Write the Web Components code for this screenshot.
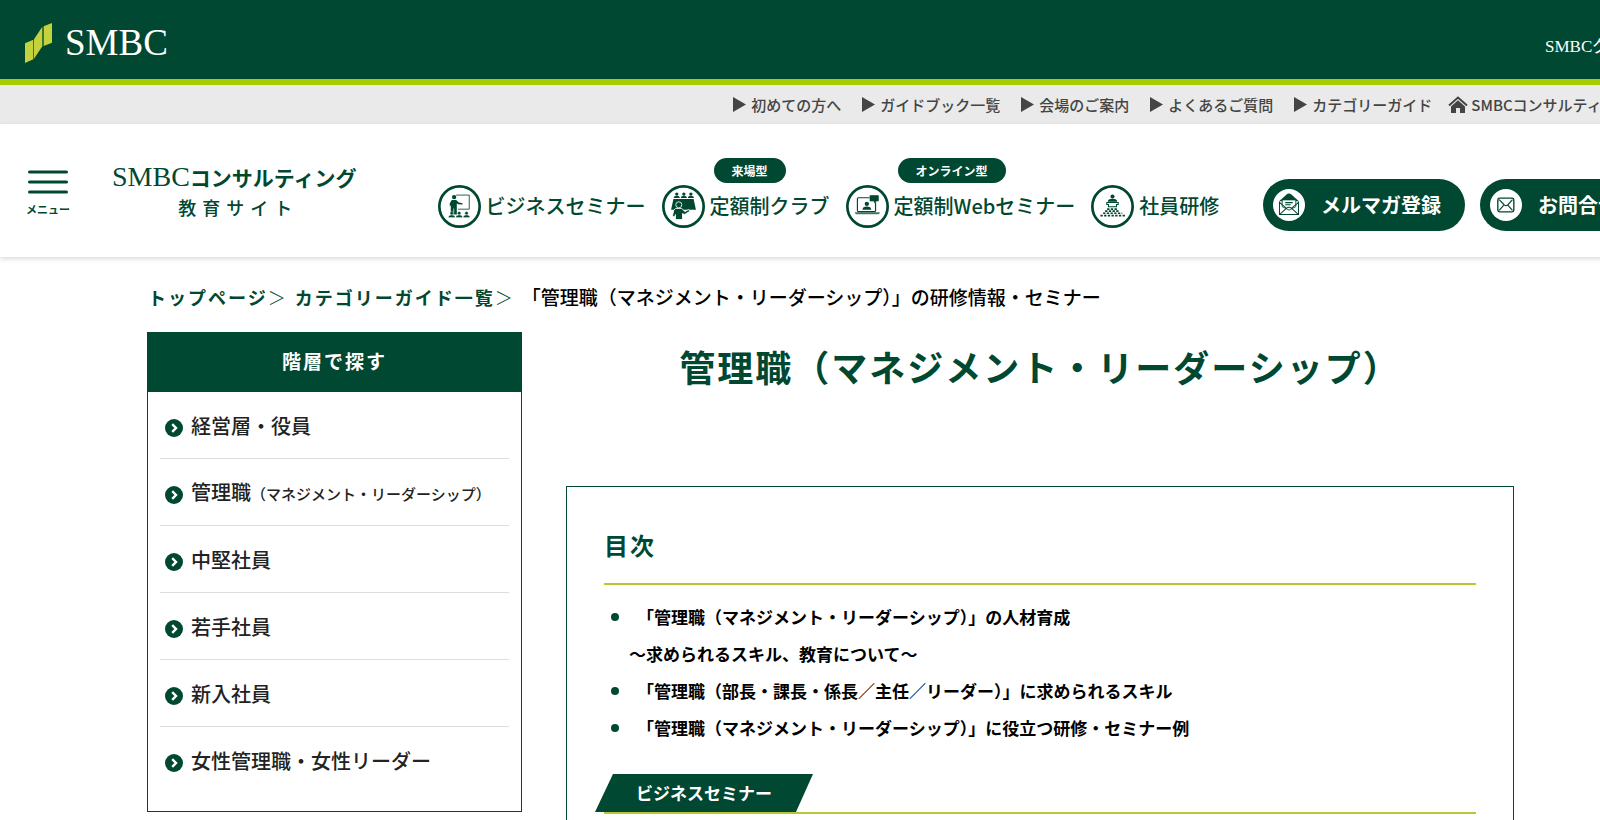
<!DOCTYPE html>
<html lang="ja">
<head>
<meta charset="utf-8">
<title>管理職（マネジメント・リーダーシップ） | SMBCコンサルティング</title>
<style>
  :root {
    --green: #004831;
    --lime: #a5cd00;
    --rule: #b9c832;
  }
  html {
    overflow-x: hidden;
  }
  body {
    margin: 0;
    min-width: 1662px;
    background: #fff;
    color: #000;
    font-family: "Noto Sans CJK JP", sans-serif;
    font-weight: 500;
    font-size: 17px;
  }
</style>
</head>
<body>
<site-topbar></site-topbar>
<utility-nav></utility-nav>

<site-header>
  <nav-item slot="nav" icon="seminar">ビジネスセミナー</nav-item>
  <nav-item slot="nav" icon="club" badge="来場型">定額制クラブ</nav-item>
  <nav-item slot="nav" icon="web" badge="オンライン型">定額制Webセミナー</nav-item>
  <nav-item slot="nav" icon="training">社員研修</nav-item>
  <pill-button slot="action" icon="letter">メルマガ登録</pill-button>
  <pill-button slot="action" icon="mail">お問合せ</pill-button>
</site-header>

<bread-crumb></bread-crumb>

<page-columns>
  <side-menu slot="side" heading="階層で探す">
    <side-item>経営層・役員</side-item>
    <side-item note="（マネジメント・リーダーシップ）">管理職</side-item>
    <side-item>中堅社員</side-item>
    <side-item>若手社員</side-item>
    <side-item>新入社員</side-item>
    <side-item>女性管理職・女性リーダー</side-item>
  </side-menu>
  <page-title>管理職（マネジメント・リーダーシップ）</page-title>
  <toc-box heading="目次" tab="ビジネスセミナー">
    <toc-item>「管理職（マネジメント・リーダーシップ）」の人材育成<br>～求められるスキル、教育について～</toc-item>
    <toc-item>「管理職（部長・課長・係長／主任／リーダー）」に求められるスキル</toc-item>
    <toc-item>「管理職（マネジメント・リーダーシップ）」に役立つ研修・セミナー例</toc-item>
  </toc-box>
</page-columns>

<script>
const ICONS = {
  seminar: `
    <path d="M54 30H93V72H60" fill="none" stroke="currentColor" stroke-width="2.5"/>
    <circle cx="48" cy="36" r="6.5" fill="currentColor"/>
    <path d="M41 45h13l8 7 11 2v4l-14-1-3-3v34H48V70h-2v18H38V60l-3 4v-10z" fill="currentColor"/>
    <g fill="currentColor" stroke="#fff" stroke-width="1">
      <circle cx="41" cy="84" r="5"/><path d="M31 97c0-6 4-8 10-8s10 2 10 8z"/>
      <circle cx="63" cy="84" r="5"/><path d="M53 97c0-6 4-8 10-8s10 2 10 8z"/>
      <circle cx="85" cy="84" r="5"/><path d="M75 97c0-6 4-8 10-8s10 2 10 8z"/>
    </g>`,
  club: `
    <g fill="currentColor">
      <circle cx="44" cy="27" r="5"/><path d="M35 39c0-5 4-7 9-7s9 2 9 7z"/>
      <circle cx="65" cy="27" r="5"/><path d="M56 39c0-5 4-7 9-7s9 2 9 7z"/>
      <circle cx="86" cy="27" r="5"/><path d="M77 39c0-5 4-7 9-7s9 2 9 7z"/>
      <path d="M34 42H94L101 74H27z"/>
    </g>
    <g fill="currentColor" stroke="#fff" stroke-width="2.5">
      <path d="M40 70h19l9 9 12-6 3 5-16 10-6-3v18H40V88l-2 7-7-2 4-18z"/>
      <circle cx="50" cy="59" r="9"/>
    </g>`,
  web: `
    <rect x="34" y="38" width="54" height="41" rx="3" fill="none" stroke="currentColor" stroke-width="3.5"/>
    <path d="M26 81H101C100 86 97 87 94 87H33C29 87 27 85 26 81z" fill="currentColor" opacity=".75"/>
    <circle cx="62" cy="56" r="6.5" fill="currentColor"/>
    <path d="M49 74c0-7 5-10 13-10s13 3 13 10z" fill="currentColor"/>
    <path d="M73 30h22q3 0 3 3v13q0 3-3 3h-5l-7 7v-7H73q-3 0-3-3V33q0-3 3-3z" fill="currentColor" stroke="#fff" stroke-width="1"/>`,
  training: `
    <circle cx="64" cy="34" r="6" fill="currentColor"/>
    <path d="M50 50c0-7 5-9 14-9s14 2 14 9z" fill="currentColor"/>
    <path d="M47 52H81V58H76V65H52V58H47z" fill="none" stroke="currentColor" stroke-width="3"/>
    <g fill="none" stroke="currentColor" stroke-width="5" stroke-dasharray="7 4">
      <path d="M48 72H81"/><path d="M42 78H86"/><path d="M36 84H93"/><path d="M28 91H101"/>
    </g>`,
  letter: `
    <path d="M18 36 40 16q7-6 14 0L76 36z" fill="currentColor"/>
    <path d="M27 32H67V52L47 62 27 52z" fill="#fff" stroke="currentColor" stroke-width="2.5"/>
    <path d="M36 40H58M36 46H52" stroke="currentColor" stroke-width="3"/>
    <path d="M19 37V75H75V37M19 39 40 57M75 39 54 57M19 75 40 56q7-5 14 0L75 75" fill="none" stroke="currentColor" stroke-width="3"/>`,
  mail: `
    <rect x="23" y="27" width="47" height="40" rx="5" fill="none" stroke="currentColor" stroke-width="4"/>
    <path d="M27 31 42 47q5 4 10 0L66 31M27 63 40 48M66 63 53 48" fill="none" stroke="currentColor" stroke-width="3.5"/>`
};

class BaseElement extends HTMLElement {
  connectedCallback() {
    if (this.shadowRoot) return;
    this.attachShadow({ mode: 'open' });
    this.shadowRoot.innerHTML = this.render();
  }
}

class SiteTopbar extends BaseElement {
  render() {
    return `
      <style>
        :host {
          display: flex;
          align-items: center;
          justify-content: space-between;
          box-sizing: border-box;
          height: 85px;
          padding: 6px 16px 0 25px;
          background: var(--green);
          border-bottom: 6px solid var(--lime);
        }
        a {
          display: flex;
          align-items: center;
          color: #fff;
          text-decoration: none;
          font-family: "Liberation Serif", "Noto Sans CJK JP", serif;
          font-weight: 400;
          white-space: nowrap;
        }
        .logo {
          gap: 13px;
          font-size: 37px;
          line-height: 40px;
        }
        .group {
          width: 101px;
          padding-top: 4px;
          font-size: 17px;
        }
      </style>
      <a class="logo" href="#">
        <svg width="27" height="40" viewBox="0 0 81 120" fill="#c4d23d" aria-hidden="true">
          <path d="M0 61 25 50V109L0 120z"/>
          <path d="M27 49 52 11V70L27 107z"/>
          <path d="M56 10 81 0V59L56 69z"/>
        </svg>
        SMBC
      </a>
      <a class="group" href="#">SMBCグループ</a>
    `;
  }
}

class UtilityNav extends BaseElement {
  render() {
    const links = ['初めての方へ', 'ガイドブック一覧', '会場のご案内', 'よくあるご質問', 'カテゴリーガイド'];
    return `
      <style>
        :host {
          display: block;
          background: #eaeaea;
        }
        nav {
          display: flex;
          align-items: center;
          gap: 16px;
          height: 39px;
          margin-left: 44%;
          padding-left: 2px;
        }
        .links {
          display: flex;
          gap: 21px;
        }
        a {
          display: flex;
          align-items: center;
          gap: 5px;
          color: #444;
          font-size: 15px;
          line-height: 20px;
          white-space: nowrap;
          text-decoration: none;
        }
        .home {
          gap: 3px;
        }
      </style>
      <nav>
        <div class="links">
          ${links.map((text) => `
          <a href="#"><svg width="13" height="15" viewBox="0 0 13 15" fill="#444" aria-hidden="true"><path d="M0 0 13 7.5 0 15z"/></svg>${text}</a>`).join('')}
        </div>
        <a class="home" href="#">
          <svg width="20" height="18" viewBox="0 0 20 18" aria-hidden="true">
            <path d="M1 9.500 10 1.500 19 9.500" fill="none" stroke="#444" stroke-width="2"/>
            <path d="M3 10.500 10 4.300 17 10.500V17H12V12H8V17H3z" fill="#444"/>
          </svg>SMBCコンサルティング</a>
      </nav>
    `;
  }
}

class SiteHeader extends BaseElement {
  render() {
    return `
      <style>
        :host {
          display: flex;
          align-items: center;
          box-sizing: border-box;
          height: 133px;
          padding: 0 20px 0 26px;
          background: #fff;
          box-shadow: 0 2px 5px rgba(0, 0, 0, .15);
          color: var(--green);
          white-space: nowrap;
        }
        button {
          display: flex;
          flex-direction: column;
          align-items: center;
          gap: 7px;
          padding: 5px 0 0;
          border: 0;
          background: none;
          color: inherit;
          font: inherit;
          font-size: 11px;
          font-weight: 700;
          line-height: 16px;
        }
        .logo {
          display: flex;
          flex-direction: column;
          align-items: center;
          margin-left: 42px;
          color: inherit;
          text-decoration: none;
        }
        .name {
          font-size: 21px;
          font-weight: 700;
          line-height: 32px;
        }
        .name span {
          font: 400 28px "Liberation Serif", serif;
        }
        .sub {
          padding-left: 8px;
          font-size: 18px;
          line-height: 28px;
          letter-spacing: 6px;
        }
        nav, .actions {
          display: flex;
          align-items: center;
        }
        nav {
          gap: 16px;
          margin-left: 81px;
          padding-top: 31px;
        }
        .actions {
          gap: 15px;
          margin-left: auto;
          padding-top: 28px;
        }
      </style>
      <button type="button">
        <svg width="40" height="24" viewBox="0 0 40 24" stroke="currentColor" stroke-width="3" stroke-linecap="round" aria-hidden="true">
          <path d="M1.500 2H38.500M1.500 12H38.500M1.500 22H38.500"/>
        </svg>
        メニュー
      </button>
      <a class="logo" href="#">
        <div class="name"><span>SMBC</span>コンサルティング</div>
        <div class="sub">教育サイト</div>
      </a>
      <nav><slot name="nav"></slot></nav>
      <div class="actions"><slot name="action"></slot></div>
    `;
  }
}

class NavItem extends BaseElement {
  render() {
    const badge = this.getAttribute('badge');
    return `
      <style>
        :host {
          display: block;
          position: relative;
        }
        a {
          display: flex;
          align-items: center;
          gap: 5px;
          color: var(--green);
          font-size: 20px;
          line-height: 30px;
          text-decoration: none;
        }
        .badge {
          position: absolute;
          left: 52px;
          bottom: 45px;
          padding: 0 18px;
          border-radius: 13px;
          background: var(--green);
          color: #fff;
          font-size: 12px;
          font-weight: 700;
          line-height: 25px;
        }
      </style>
      ${badge ? `<span class="badge">${badge}</span>` : ''}
      <a href="#">
        <svg width="43" height="43" viewBox="0 0 128 128" aria-hidden="true">
          <circle cx="64" cy="64" r="60" fill="#fff" stroke="currentColor" stroke-width="8"/>
          ${ICONS[this.getAttribute('icon')]}
        </svg>
        <span><slot></slot></span>
      </a>
    `;
  }
}

class PillButton extends BaseElement {
  render() {
    return `
      <style>
        :host {
          display: block;
        }
        a {
          display: flex;
          align-items: center;
          gap: 16px;
          height: 52px;
          padding: 0 24px 0 10px;
          border-radius: 26px;
          background: var(--green);
          color: #fff;
          font-size: 20px;
          font-weight: 700;
          text-decoration: none;
        }
        svg {
          color: var(--green);
        }
      </style>
      <a href="#">
        <svg width="32" height="32" viewBox="0 0 94 94" aria-hidden="true">
          <circle cx="47" cy="47" r="47" fill="#fff"/>
          ${ICONS[this.getAttribute('icon')]}
        </svg>
        <slot></slot>
      </a>
    `;
  }
}

class BreadCrumb extends BaseElement {
  render() {
    return `
      <style>
        :host {
          display: flex;
          align-items: center;
          padding: 25px 148px 0;
          font-size: 18px;
          line-height: 30px;
          white-space: nowrap;
        }
        a {
          color: var(--green);
          font-weight: 700;
          letter-spacing: 2px;
          text-decoration: none;
        }
        i {
          width: 27px;
          color: var(--green);
          font-style: normal;
          font-weight: 300;
        }
        span {
          font-size: 19px;
        }
      </style>
      <a href="#">トップページ</a><i>＞</i>
      <a href="#">カテゴリーガイド一覧</a><i>＞</i>
      <span>「管理職（マネジメント・リーダーシップ）」の研修情報・セミナー</span>
    `;
  }
}

class PageColumns extends BaseElement {
  render() {
    return `
      <style>
        :host {
          display: grid;
          grid-template-columns: 375px 1fr;
          gap: 44px;
          align-items: start;
          padding: 20px 148px 40px 147px;
        }
      </style>
      <aside><slot name="side"></slot></aside>
      <main><slot></slot></main>
    `;
  }
}

class SideMenu extends BaseElement {
  render() {
    return `
      <style>
        :host {
          display: block;
          border: 1px solid var(--green);
        }
        h2 {
          margin: 0;
          padding-bottom: 3px;
          background: var(--green);
          color: #fff;
          font-size: 19px;
          font-weight: 700;
          line-height: 56px;
          letter-spacing: 2px;
          text-align: center;
        }
        nav {
          padding: 0 12px 18px;
        }
      </style>
      <h2>${this.getAttribute('heading')}</h2>
      <nav><slot></slot></nav>
    `;
  }
}

class SideItem extends BaseElement {
  render() {
    const note = this.getAttribute('note');
    return `
      <style>
        :host {
          display: block;
          border-bottom: 1px solid #ddd;
        }
        :host(:last-child) {
          border-bottom: 0;
        }
        a {
          display: flex;
          align-items: center;
          gap: 8px;
          height: 66px;
          padding: 2px 0 0 5px;
          box-sizing: border-box;
          color: #222;
          font-size: 20px;
          line-height: 30px;
          text-decoration: none;
        }
        svg {
          margin-top: 4px;
        }
        small {
          font-size: 15px;
        }
      </style>
      <a href="#">
        <svg width="18" height="18" viewBox="0 0 18 18" aria-hidden="true">
          <circle cx="9" cy="9" r="9" fill="#004831"/>
          <path d="M7.200 5.200 11 9 7.200 12.800" fill="none" stroke="#fff" stroke-width="2.400"/>
        </svg>
        <span><slot></slot>${note ? `<small>${note}</small>` : ''}</span>
      </a>
    `;
  }
}

class PageTitle extends BaseElement {
  render() {
    return `
      <style>
        :host {
          display: block;
        }
        h1 {
          margin: 0 0 93px;
          padding-top: 7px;
          color: var(--green);
          font-size: 36px;
          font-weight: 700;
          line-height: 54px;
          letter-spacing: 2px;
          text-align: center;
        }
      </style>
      <h1><slot></slot></h1>
    `;
  }
}

class TocBox extends BaseElement {
  render() {
    return `
      <style>
        :host {
          display: block;
          border: 1px solid var(--green);
          padding: 38px 37px 40px;
        }
        h2, h3 {
          margin: 0;
        }
        h2 {
          padding-bottom: 18px;
          border-bottom: 2px solid var(--rule);
          color: var(--green);
          font-size: 24px;
          font-weight: 700;
          line-height: 40px;
          letter-spacing: 2px;
        }
        .list {
          padding: 13px 0 28px;
        }
        .tab {
          border-bottom: 2px solid var(--rule);
        }
        h3 {
          width: fit-content;
          margin-left: -9px;
          padding: 0 41px;
          background: var(--green);
          clip-path: polygon(18px 0, 100% 0, calc(100% - 17px) 100%, 0 100%);
          color: #fff;
          font-size: 17px;
          font-weight: 700;
          line-height: 38px;
        }
      </style>
      <h2>${this.getAttribute('heading')}</h2>
      <div class="list" role="list"><slot></slot></div>
      <div class="tab"><h3>${this.getAttribute('tab')}</h3></div>
    `;
  }
}

class TocItem extends BaseElement {
  connectedCallback() {
    super.connectedCallback();
    this.setAttribute('role', 'listitem');
  }

  render() {
    return `
      <style>
        :host {
          display: grid;
          grid-template-columns: 8px 1fr;
          column-gap: 10px;
          padding-left: 7px;
        }
        .dot {
          width: 8px;
          height: 8px;
          margin-top: 15px;
          border-radius: 50%;
          background: var(--green);
        }
        a {
          color: #000;
          font-size: 17px;
          font-weight: 700;
          line-height: 37px;
          text-decoration: none;
          text-indent: 8px;
        }
      </style>
      <span class="dot"></span>
      <a href="#"><slot></slot></a>
    `;
  }
}

customElements.define('site-topbar', SiteTopbar);
customElements.define('utility-nav', UtilityNav);
customElements.define('site-header', SiteHeader);
customElements.define('nav-item', NavItem);
customElements.define('pill-button', PillButton);
customElements.define('bread-crumb', BreadCrumb);
customElements.define('page-columns', PageColumns);
customElements.define('side-menu', SideMenu);
customElements.define('side-item', SideItem);
customElements.define('page-title', PageTitle);
customElements.define('toc-box', TocBox);
customElements.define('toc-item', TocItem);
</script>
</body>
</html>
